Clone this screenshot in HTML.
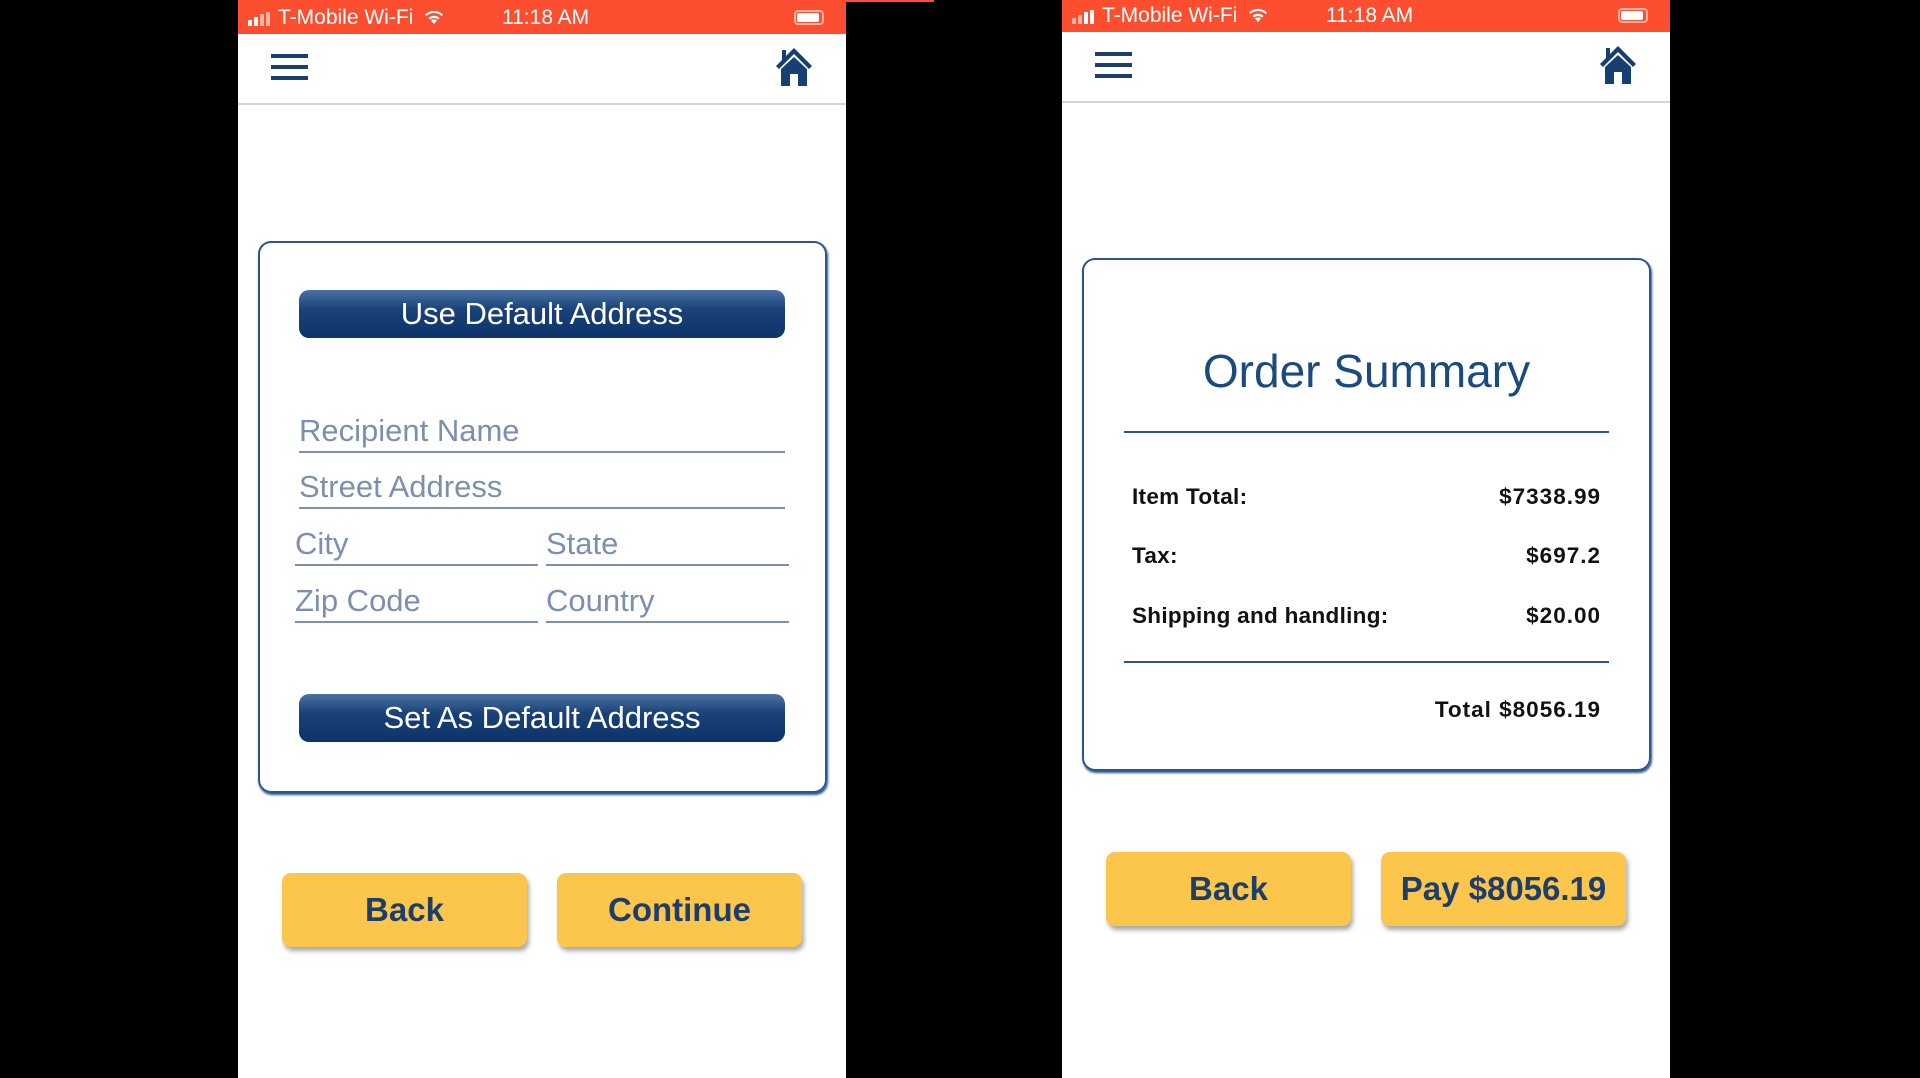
<!DOCTYPE html>
<html><head><meta charset="utf-8"><style>
*{margin:0;padding:0;box-sizing:border-box}
body{width:1920px;height:1078px;background:#000;position:relative;overflow:hidden;font-family:"Liberation Sans",sans-serif}
.ph{position:absolute;top:0;width:608px;height:1078px;background:#fff}
.sb{position:absolute;left:0;top:0;width:100%;height:34px;background:#fd4e30;color:#fff;font-size:21px}
.sb .c{position:absolute;left:40px;top:6px}
.sb .t{position:absolute;left:264px;top:6px}
.sig{position:absolute;left:10px;top:12px}
.wifi{position:absolute;left:185px;top:9px}
.bat{position:absolute;left:556px;top:10px;width:30px;height:15px;border:2px solid #ffb3a5;border-radius:4px}
.bat i{position:absolute;left:1px;top:1px;width:22px;height:9px;background:#fff;border-radius:2px}
.nav{position:absolute;left:0;top:34px;width:100%;height:71px;border-bottom:2px solid #d4d4d4}
.hb{position:absolute;left:33px;top:20px;width:37px}
.hb i{display:block;height:4px;background:#1a3f6e;margin-bottom:7px}
.home{position:absolute;right:33px;top:12px}
.card{position:absolute;border:2px solid #2a5590;border-radius:13px;box-shadow:1px 2px 2px #2a5590}
.bb{position:absolute;height:48px;border-radius:10px;background:linear-gradient(#4a72a5,#1a4278 40%,#0d336a);color:#fff;font-size:31px;text-align:center;line-height:48px}
.fld{position:absolute;border-bottom:2px solid #7a90b0;color:#7d8fae;font-size:31px;height:40px;line-height:36px}
.yb{position:absolute;width:245px;height:74px;background:#fcc54c;border-radius:9px;box-shadow:2px 4px 5px rgba(0,0,0,.35);color:#1d3d6b;font-weight:bold;font-size:33px;text-align:center;line-height:74px}
.row{position:absolute;left:48px;right:48px;font-weight:bold;font-size:22.5px;color:#111;letter-spacing:.3px}
.row span{position:absolute;right:0;letter-spacing:1px}
.ln{position:absolute;left:40px;right:40px;height:2px;background:#2a5590}
</style></head><body>
<div style="position:absolute;left:238px;top:0;width:696px;height:2px;background:#fd4e30"></div>
<div class="ph" style="left:238px">
 <div class="sb"><svg class="sig" width="26" height="14"><rect x="0" y="8" width="4" height="6" fill="#fff"/><rect x="6" y="5" width="4" height="9" fill="#fff"/><rect x="12" y="2" width="4" height="12" fill="#ffb3a5"/><rect x="18" y="0" width="4" height="14" fill="#ffb3a5"/></svg><span class="c">T-Mobile Wi-Fi</span><svg class="wifi" width="22" height="16" viewBox="0 0 22 16"><path d="M11 15 L8 11.5 A5 5 0 0 1 14 11.5 Z M5.5 9 A8 8 0 0 1 16.5 9 L15 10.5 A6 6 0 0 0 7 10.5 Z M2 5.5 A13 13 0 0 1 20 5.5 L18.5 7 A11 11 0 0 0 3.5 7 Z" fill="#fff"/></svg><span class="t">11:18 AM</span><div class="bat"><i></i></div></div>
 <div class="nav"><div class="hb"><i></i><i></i><i></i></div>
 <svg class="home" width="38" height="40" viewBox="0 0 38 40"><path d="M19 2 L1 20 L4 23 L19 8 L34 23 L37 20 Z M6 23 L19 11 L32 23 L32 40 L23 40 L23 28 L15 28 L15 40 L6 40 Z M7 4 L11 4 L11 10 L7 14 Z" fill="#163f73"/></svg></div>
 <div class="card" style="left:20px;top:241px;width:569px;height:552px">
  <div class="bb" style="left:39px;top:47px;width:486px">Use Default Address</div>
  <div class="fld" style="left:39px;top:170px;width:486px">Recipient Name</div>
  <div class="fld" style="left:39px;top:226px;width:486px">Street Address</div>
  <div class="fld" style="left:35px;top:283px;width:243px">City</div>
  <div class="fld" style="left:286px;top:283px;width:243px">State</div>
  <div class="fld" style="left:35px;top:340px;width:243px">Zip Code</div>
  <div class="fld" style="left:286px;top:340px;width:243px">Country</div>
  <div class="bb" style="left:39px;top:451px;width:486px">Set As Default Address</div>
 </div>
 <div class="yb" style="left:44px;top:873px">Back</div>
 <div class="yb" style="left:319px;top:873px">Continue</div>
</div>
<div class="ph" style="left:1062px">
 <div class="sb" style="height:32px"><svg class="sig" style="top:10px" width="26" height="14"><rect x="0" y="8" width="4" height="6" fill="#ffb3a5"/><rect x="6" y="5" width="4" height="9" fill="#ffb3a5"/><rect x="12" y="2" width="4" height="12" fill="#fff"/><rect x="18" y="0" width="4" height="14" fill="#fff"/></svg><span class="c" style="top:4px">T-Mobile Wi-Fi</span><svg class="wifi" style="top:7px" width="22" height="16" viewBox="0 0 22 16"><path d="M11 15 L8 11.5 A5 5 0 0 1 14 11.5 Z M5.5 9 A8 8 0 0 1 16.5 9 L15 10.5 A6 6 0 0 0 7 10.5 Z M2 5.5 A13 13 0 0 1 20 5.5 L18.5 7 A11 11 0 0 0 3.5 7 Z" fill="#fff"/></svg><span class="t" style="top:4px">11:18 AM</span><div class="bat" style="top:8px"><i></i></div></div>
 <div class="nav" style="top:32px"><div class="hb"><i></i><i></i><i></i></div>
 <svg class="home" width="38" height="40" viewBox="0 0 38 40"><path d="M19 2 L1 20 L4 23 L19 8 L34 23 L37 20 Z M6 23 L19 11 L32 23 L32 40 L23 40 L23 28 L15 28 L15 40 L6 40 Z M7 4 L11 4 L11 10 L7 14 Z" fill="#163f73"/></svg></div>
 <div class="card" style="left:20px;top:258px;width:569px;height:513px">
  <div style="position:absolute;left:0;right:0;top:84px;text-align:center;font-size:46px;color:#1a4a80">Order Summary</div>
  <div class="ln" style="top:171px"></div>
  <div class="row" style="top:224px">Item Total:<span>$7338.99</span></div>
  <div class="row" style="top:283px">Tax:<span>$697.2</span></div>
  <div class="row" style="top:343px">Shipping and handling:<span>$20.00</span></div>
  <div class="ln" style="top:401px"></div>
  <div class="row" style="top:437px"><span>Total $8056.19</span></div>
 </div>
 <div class="yb" style="left:44px;top:852px">Back</div>
 <div class="yb" style="left:319px;top:852px">Pay $8056.19</div>
</div>
</body></html>
